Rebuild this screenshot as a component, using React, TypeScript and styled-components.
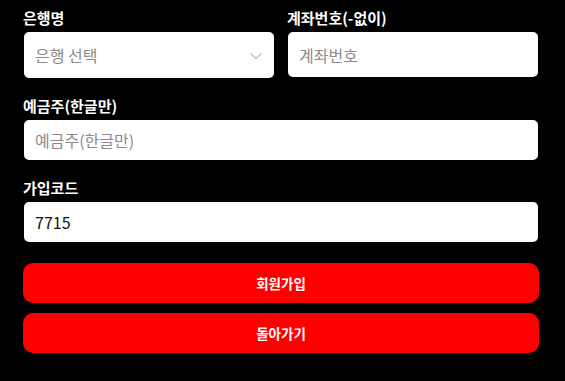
import React, { useState } from 'react'
import styled, { createGlobalStyle } from 'styled-components'

const GlobalStyle = createGlobalStyle`
  html, body {
    margin: 0;
    padding: 0;
    background: #000;
  }
  body {
    font-family: 'Noto Sans CJK KR', 'Noto Sans', sans-serif;
  }
  * {
    box-sizing: border-box;
  }
`

const Page = styled.div`
  width: 565px;
  height: 381px;
  background: #000;
  padding: 8px 26px 0 23px;
`

const Row = styled.div`
  display: grid;
  grid-template-columns: 1fr 1fr;
  column-gap: 12px;
  align-items: start;
`

const Field = styled.div<{ $gap?: number }>`
  display: flex;
  flex-direction: column;
  margin-top: ${(p) => p.$gap ?? 0}px;
`

const Label = styled.label`
  color: #fff;
  font-size: 15px;
  font-weight: 700;
  line-height: 20px;
  margin-bottom: 4px;
`

const Input = styled.input<{ $h?: number }>`
  height: ${(p) => p.$h ?? 40}px;
  margin: 0 1px;
  border: none;
  outline: none;
  border-radius: 5px;
  background: #fff;
  padding: 0 11px;
  font-family: inherit;
  font-size: 16px;
  color: #111;
  &::placeholder {
    color: #8a8a8a;
  }
`

const SelectBox = styled.div`
  position: relative;
  height: 46px;
  margin: 0 1px;
  border-radius: 5px;
  background: #fff;
  display: flex;
  align-items: center;
  padding: 0 11px;
  font-size: 16px;
  color: #8a8a8a;
  cursor: pointer;
`

const Chevron = styled.svg`
  position: absolute;
  right: 11px;
  top: 20px;
`

const Buttons = styled.div`
  display: flex;
  flex-direction: column;
  gap: 10px;
  margin-top: 21px;
`

const RedButton = styled.button`
  height: 40px;
  border: none;
  border-radius: 10px;
  background: #ff0000;
  color: #fff;
  font-family: inherit;
  font-size: 13.5px;
  font-weight: 700;
  cursor: pointer;
`

export default function App() {
  const [code, setCode] = useState('7715')

  return (
    <>
      <GlobalStyle />
      <Page>
        <Row>
          <Field>
            <Label>은행명</Label>
            <SelectBox>
              은행 선택
              <Chevron width='14' height='8' viewBox='0 0 14 8'>
                <path d='M1.5 1.5 L7 6.5 L12.5 1.5' fill='none' stroke='#c4c4c4' strokeWidth='1.6' />
              </Chevron>
            </SelectBox>
          </Field>
          <Field>
            <Label>계좌번호(-없이)</Label>
            <Input $h={45} placeholder='계좌번호' />
          </Field>
        </Row>
        <Field $gap={18}>
          <Label>예금주(한글만)</Label>
          <Input placeholder='예금주(한글만)' />
        </Field>
        <Field $gap={18}>
          <Label>가입코드</Label>
          <Input value={code} onChange={(e) => setCode(e.target.value)} />
        </Field>
        <Buttons>
          <RedButton>회원가입</RedButton>
          <RedButton>돌아가기</RedButton>
        </Buttons>
      </Page>
    </>
  )
}
